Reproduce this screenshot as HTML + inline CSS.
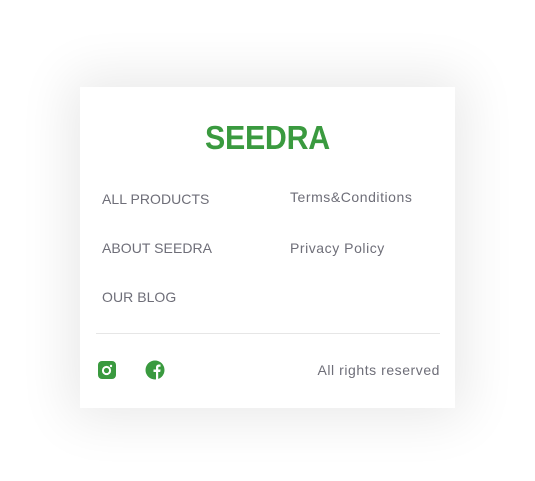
<!DOCTYPE html>
<html><head><style>
body{margin:0;width:535px;height:481px;background:#fff;position:relative;overflow:hidden;font-family:"Liberation Sans",sans-serif}
.card{position:absolute;left:80px;top:87px;width:375px;height:321px;background:#fff;box-shadow:0 0 50px 10px rgba(0,0,0,0.09)}
.logo{position:absolute;left:205px;top:119px;font-weight:bold;font-size:33px;color:#3a9a3f;letter-spacing:-0.3px;white-space:nowrap;transform-origin:left top;transform:scaleX(0.92)}
.t{position:absolute;font-size:14px;color:#6e6e78;white-space:nowrap;letter-spacing:0.55px}
.u{letter-spacing:0.05px}
.line{position:absolute;left:96px;top:333px;width:344px;height:1px;background:#e6e6e6}
</style></head><body>
<div class="card"></div>
<div class="logo">SEEDRA</div>
<div class="t u" style="left:102px;top:191px">ALL PRODUCTS</div>
<div class="t u" style="left:102px;top:240px">ABOUT SEEDRA</div>
<div class="t u" style="left:102px;top:289px">OUR BLOG</div>
<div class="t" style="left:290px;top:189px">Terms&amp;Conditions</div>
<div class="t" style="left:290px;top:240px">Privacy Policy</div>
<div class="line"></div>
<svg style="position:absolute;left:97px;top:360px" width="20" height="20" viewBox="0 0 20 20"><rect x="1" y="1" width="18" height="18" rx="4" fill="#3a9a3f"/><circle cx="9.5" cy="10.5" r="3.6" fill="none" stroke="#fff" stroke-width="2"/><circle cx="14" cy="6" r="1.2" fill="#fff"/></svg>
<svg style="position:absolute;left:145px;top:360px" width="20" height="20" viewBox="0 0 20 20"><circle cx="10" cy="10" r="9.5" fill="#3a9a3f"/><path d="M11 20V12h-2.5V9.5H11V7.5c0-2 1.2-3 3-3h1.5v2.3h-1.2c-.8 0-1 .4-1 1V9.5h2.3L15.2 12h-2v8z" fill="#fff"/></svg>
<div class="t" style="right:95px;top:362px">All rights reserved</div>
</body></html>
